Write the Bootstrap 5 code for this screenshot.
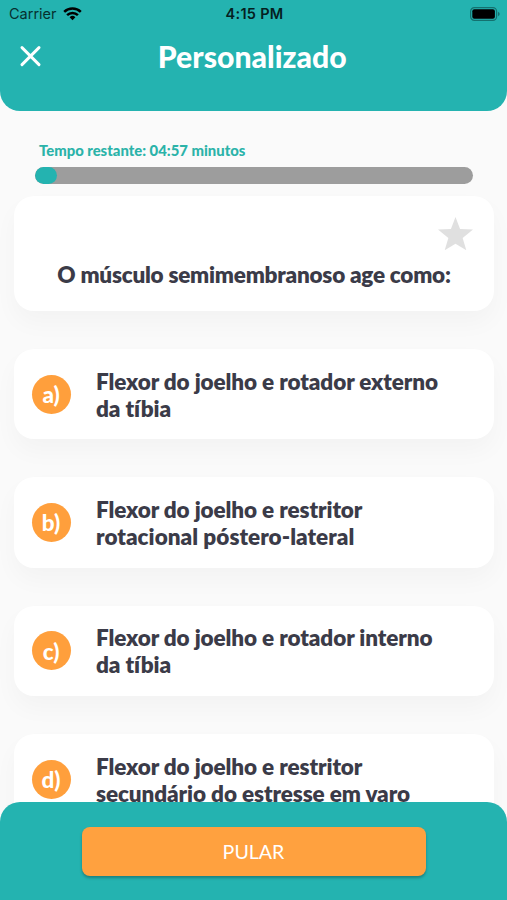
<!DOCTYPE html>
<html lang="pt-BR">
<head>
<meta charset="utf-8">
<meta name="viewport" content="width=device-width, initial-scale=1">
<title>Personalizado</title>
<link rel="stylesheet" href="https://cdn.jsdelivr.net/npm/bootstrap@5.3.0/dist/css/bootstrap.min.css">
<style>
  body { font-family: Lato, sans-serif; font-variant-ligatures: none; background: #fafafa; color: #3b3b48; height: 900px; }
  .app-header { background: #24b3b0; height: 110.5px; border-radius: 0 0 20px 20px; }
  .status-bar { height: 28px; padding: 0 7px 0 9px; font: 14.5px/28px Inter, sans-serif; color: #06302f; }
  .status-side { flex: 1 1 0; }
  .carrier { margin-right: 6px; }
  .status-clock { font-weight: 600; letter-spacing: .3px; color: #04201f; }
  .title-bar { height: 56px; padding: 0 22.5px 0 20px; }
  .title-bar h1 { font-size: 30.2px; font-weight: 900; line-height: 35px; }
  .side-slot { width: 21px; }
  .quiz { padding: 30.5px 13px 0 14px; }
  .timer { font-size: 14.85px; font-weight: 900; line-height: 18px; color: #2bb3a9; padding-left: 25px; margin-bottom: 8px; }
  .timer-track { height: 17px; border-radius: 9px; background: #9d9d9d; margin: 0 21.5px 12px 21px; }
  .timer-track .progress-bar { background: #24b3b0; border-radius: 9px; }
  .panel { --bs-card-border-width: 0; --bs-card-border-radius: 20px; --bs-card-color: #3b3b48; box-shadow: 0 12px 24px rgba(0,0,0,.03); }
  .question { height: 115px; margin-bottom: 38px; padding: 20.5px 21px 0; }
  .question h2 { font-size: 22.5px; font-weight: 800; letter-spacing: -.23px; line-height: 27px; margin-top: 11.5px; }
  .option { height: 90.3px; margin-bottom: 38px; padding: 1px 40px 0 17.5px; font-size: 22.5px; font-weight: 800; letter-spacing: -.1px; line-height: 27px; }
  .wide-line { letter-spacing: .03px; }
  .letter { width: 39px; height: 39px; background: #ff9f3c; margin: -1px 25.5px 0 0; padding-top: 1px; font-weight: 900; }
  .app-footer { background: #24b3b0; height: 98px; border-radius: 20px 20px 0 0; padding-top: 25px; }
  .skip { --bs-btn-bg: #ffa13f; --bs-btn-color: #fff; --bs-btn-border-width: 0; --bs-btn-hover-bg: #f7932c; --bs-btn-hover-color: #fff; width: 344px; height: 49px; border-radius: 8px; font-size: 19.6px; box-shadow: 0 2px 3px rgba(0,0,0,.28); }
</style>
</head>
<body class="overflow-hidden position-relative">
<header class="app-header">
  <div class="status-bar d-flex align-items-center">
    <div class="status-side d-flex align-items-center">
      <span class="carrier">Carrier</span>
      <svg width="19" height="14" viewBox="0 0 19 14" fill="none" stroke="#000" stroke-width="2.5">
        <path d="M1.2 4.9a11.8 11.8 0 0 1 16.6 0M4.1 8.2a7.7 7.7 0 0 1 10.8 0"/>
        <path d="M9.5 13.2 6.6 10.3a4.1 4.1 0 0 1 5.8 0z" fill="#000" stroke="none"/>
      </svg>
    </div>
    <span class="status-clock">4:15 PM</span>
    <div class="status-side d-flex justify-content-end">
      <svg width="30" height="14" viewBox="0 0 30 14">
        <rect x=".6" y=".6" width="26" height="12.8" rx="3.8" fill="none" stroke="#14716f" stroke-width="1.2"/>
        <rect x="2.3" y="2.3" width="22.6" height="9.4" rx="2" fill="#000"/>
        <path d="M28 4.8q1.7.8 1.7 2.2T28 9.2z" fill="#14716f"/>
      </svg>
    </div>
  </div>
  <div class="title-bar d-flex align-items-center justify-content-between">
    <svg class="side-slot" height="21" viewBox="0 0 21 21" stroke="#fff" stroke-width="2.9" stroke-linecap="round" role="button" aria-label="Fechar"><path d="m2 1.6 17 17M19 1.6l-17 17"/></svg>
    <h1 class="text-white mb-0">Personalizado</h1>
    <span class="side-slot"></span>
  </div>
</header>

<main class="quiz">
  <div class="timer">Tempo restante: 04:57 minutos</div>
  <div class="progress timer-track" role="progressbar" aria-valuenow="5" aria-valuemin="0" aria-valuemax="100">
    <div class="progress-bar" style="width:5.1%"></div>
  </div>

  <section class="card panel question">
    <svg class="align-self-end" width="35" height="33.25" viewBox="2 2 20 19" fill="#e0e0e0"><path d="M12 17.27 18.18 21l-2.1-7.03L22 9.1l-7.4-.2L12 2 9.4 8.9 2 9.1l5.92 4.87L5.82 21z"/></svg>
    <h2 class="text-center mb-0">O músculo semimembranoso age como:</h2>
  </section>

  <div class="card panel option flex-row align-items-center">
    <span class="letter rounded-circle d-flex align-items-center justify-content-center flex-shrink-0 text-white">a)</span>
    <span>Flexor do joelho e rotador externo<br>da tíbia</span>
  </div>
  <div class="card panel option flex-row align-items-center">
    <span class="letter rounded-circle d-flex align-items-center justify-content-center flex-shrink-0 text-white">b)</span>
    <span>Flexor do joelho e restritor<br><span class="wide-line">rotacional póstero-lateral</span></span>
  </div>
  <div class="card panel option flex-row align-items-center">
    <span class="letter rounded-circle d-flex align-items-center justify-content-center flex-shrink-0 text-white">c)</span>
    <span>Flexor do joelho e rotador interno<br>da tíbia</span>
  </div>
  <div class="card panel option flex-row align-items-center">
    <span class="letter rounded-circle d-flex align-items-center justify-content-center flex-shrink-0 text-white">d)</span>
    <span>Flexor do joelho e restritor<br>secundário do estresse em varo</span>
  </div>
</main>

<footer class="app-footer fixed-bottom d-flex justify-content-center align-items-start">
  <button class="btn skip" type="button">PULAR</button>
</footer>
<script src="https://cdn.jsdelivr.net/npm/bootstrap@5.3.0/dist/js/bootstrap.bundle.min.js"></script>
</body>
</html>
